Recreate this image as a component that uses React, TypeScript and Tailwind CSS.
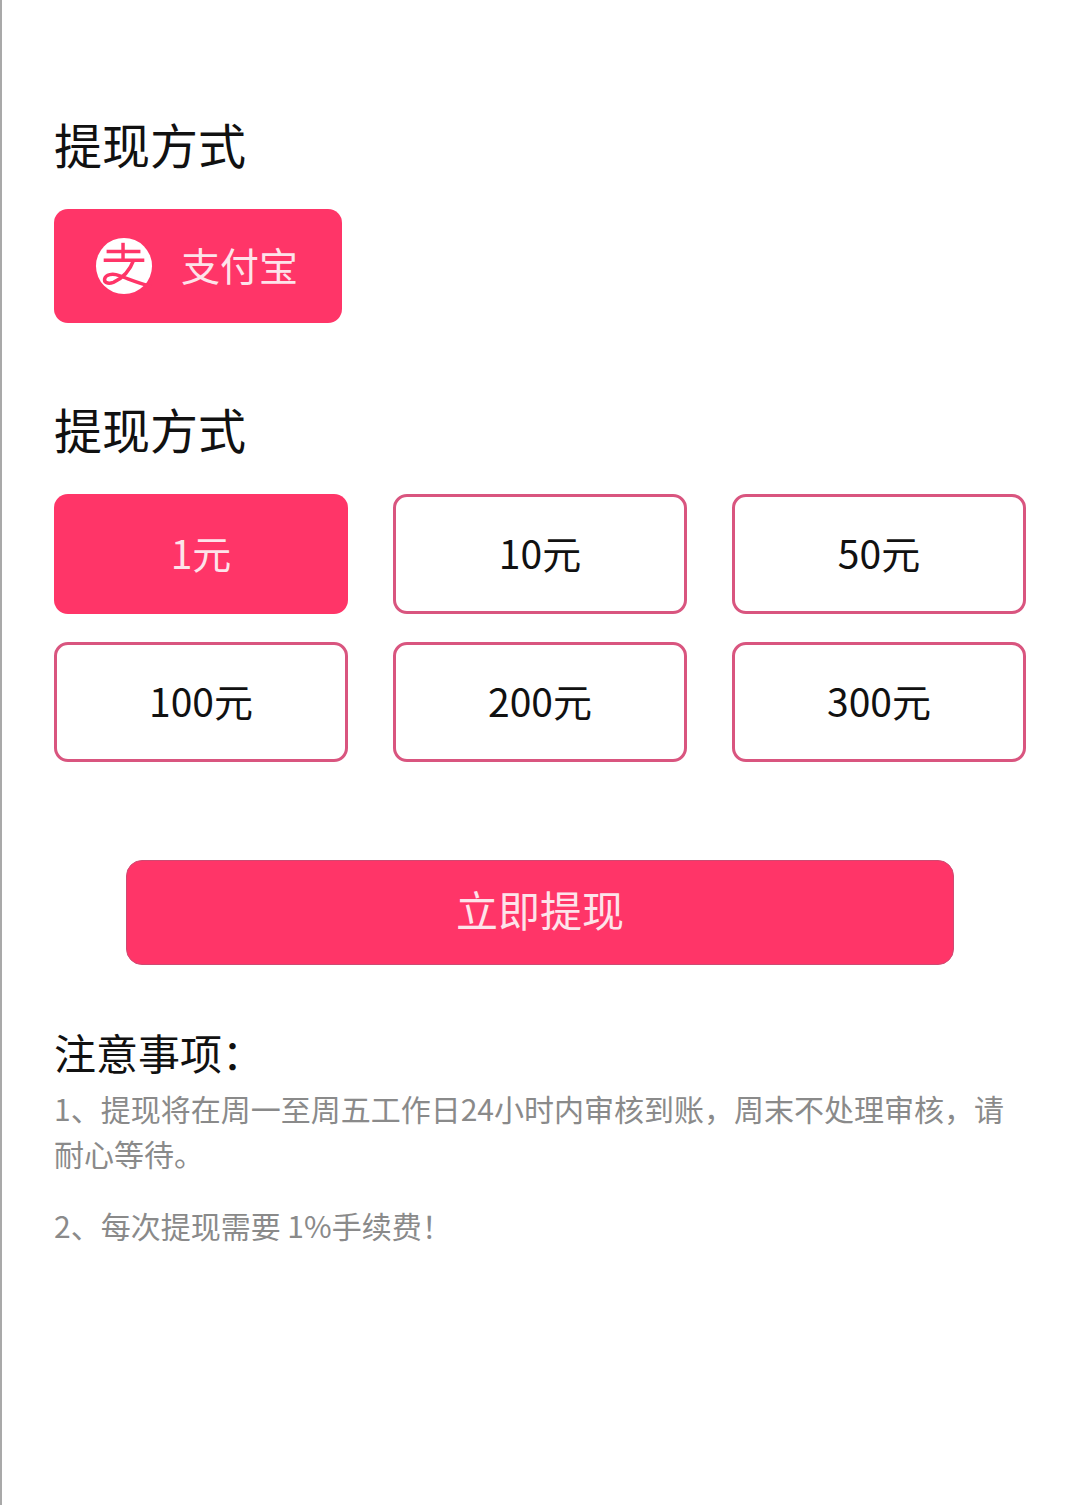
const amounts = ["1元", "10元", "50元", "100元", "200元", "300元"];

function AlipayLogo() {
  return (
    <svg viewBox="0 0 60 60" className="w-[58px] h-[58px] shrink-0">
      <circle cx="30" cy="30" r="29" fill="#fff" />
      <g fill="none" stroke="#ff3568" strokeWidth="3.6">
        <path d="M29 6v18" />
        <path d="M12 15h35" />
        <path d="M9 24h42" />
        <path d="M40 24c-4 11-12 19-21 23-6 2-10 0-9-4 1-4 8-6 15-3 9 3 20 8 33 11" />
      </g>
    </svg>
  );
}

export default function App() {
  return (
    <div className="h-[1505px] bg-white border-l-2 border-[#a9a9a9] pl-[52px] pr-[54px] pt-[109px] font-['Noto_Sans_CJK_SC',sans-serif]">
      <h2 className="text-[48px] leading-[68px] font-normal text-[#111]">提现方式</h2>

      <div className="mt-[32px] w-[288px] h-[114px] rounded-[14px] bg-[#ff3568] flex items-center pl-[41px] gap-[28px]">
        <AlipayLogo />
        <span className="text-[39px] pb-[4px] text-[#fde3ea]">支付宝</span>
      </div>

      <h2 className="mt-[71px] text-[48px] leading-[68px] font-normal text-[#111]">提现方式</h2>

      <div className="mt-[32px] grid grid-cols-3 gap-x-[45px] gap-y-[28px]">
        {amounts.map((amount, i) => (
          <div
            key={amount}
            className={
              i === 0
                ? "h-[120px] pb-[4px] rounded-[14px] bg-[#ff3568] text-[#fde3ea] text-[39px] flex items-center justify-center"
                : "h-[120px] pb-[4px] rounded-[14px] border-[3px] border-[#d9557f] bg-white text-[#111] text-[39px] flex items-center justify-center"
            }
          >
            {amount}
          </div>
        ))}
      </div>

      <div className="mt-[98px] mx-[72px] h-[105px] pb-[8px] rounded-[16px] bg-[#ff3568] border border-[#cf4a72] text-[#fde3ea] text-[42px] flex items-center justify-center">
        立即提现
      </div>

      <h3 className="mt-[56px] text-[42px] leading-[62px] font-normal text-[#111]">注意事项：</h3>
      <p className="mt-[3px] text-[30px] leading-[45px] text-[#8a8a8a]">
        1、提现将在周一至周五工作日24小时内审核到账，周末不处理审核，请耐心等待。
      </p>
      <p className="mt-[27px] text-[30px] leading-[45px] text-[#8a8a8a]">2、每次提现需要 1%手续费！</p>
    </div>
  );
}
